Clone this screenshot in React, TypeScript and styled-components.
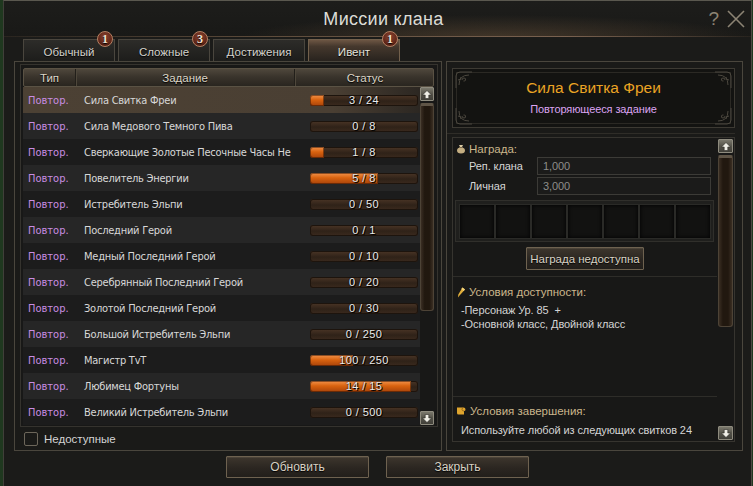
import React from 'react';
import styled, { createGlobalStyle } from 'styled-components';

const FONT = `"Liberation Sans", Arial, sans-serif`;
const ROW_FONT = `"DejaVu Sans Condensed", "DejaVu Sans", sans-serif`;

const Global = createGlobalStyle`
  html, body { margin: 0; padding: 0; background: #1f381f; }
  body { font-family: ${FONT}; }
  * { box-sizing: border-box; }
`;

const Window = styled.div`
  margin-left: 3px;
  width: 749px;
  height: 486px;
  background: #1b1b19;
  border-left: 1px solid #403f39;
  border-top: 1px solid #5a584f;
  border-right: 1px solid #4c4a43;
  display: flex;
  flex-direction: column;
  color: #d2d2d2;
  font-family: ${FONT};
  font-size: 11.5px;
`;

const TitleBar = styled.div`
  height: 36px;
  flex: none;
  display: grid;
  grid-template-columns: 1fr auto 1fr;
  align-items: center;
  background:
    linear-gradient(to right, rgba(90, 72, 55, 0.25), #5e4c3b 35%, #7a6250 75%, rgba(90, 72, 55, 0.2)) bottom / 100% 1px no-repeat,
    radial-gradient(ellipse 300px 26px at 66% 100%, rgba(120, 92, 64, 0.42), transparent 85%),
    linear-gradient(#1d1d1b, #191917);
`;

const Title = styled.div`
  grid-column: 2;
  padding-left: 12px;
  font-size: 18px;
  color: #dcdcd6;
  letter-spacing: 0.3px;
`;

const TitleIcons = styled.div`
  grid-column: 3;
  justify-self: end;
  display: flex;
  align-items: center;
  gap: 8px;
  padding-right: 6px;
  color: #8c8474;
  font-size: 19px;
`;

const TabRow = styled.div`
  height: 24px;
  flex: none;
  display: flex;
  align-items: flex-end;
  gap: 3px;
  padding-left: 19px;
`;

const Tab = styled.div<{ $active?: boolean }>`
  position: relative;
  width: 92px;
  height: 22px;
  display: flex;
  align-items: center;
  justify-content: center;
  padding-top: 2px;
  border: 1px solid ${p => (p.$active ? '#72604c' : '#4a463e')};
  border-bottom: none;
  background: ${p =>
    p.$active
      ? 'linear-gradient(#6d5643 0%, #45382d 30%, #28231e 100%)'
      : 'linear-gradient(#2d2c29, #1d1d1b)'};
  color: ${p => (p.$active ? '#e4e2dc' : '#d4d2cc')};
  font-size: 11.5px;
  text-shadow: 0 1px 1px #000;
`;

const Badge = styled.div`
  position: absolute;
  top: -9px;
  right: 1px;
  width: 16px;
  height: 16px;
  border-radius: 50%;
  background: radial-gradient(circle at 50% 35%, #8a4430, #5a2216 70%);
  border: 1px solid #b48062;
  color: #f0e2d4;
  font-family: "Liberation Serif", serif;
  font-weight: bold;
  font-size: 12px;
  display: flex;
  align-items: center;
  justify-content: center;
  z-index: 2;
`;

const Body = styled.div`
  height: 390px;
  flex: none;
  display: flex;
  gap: 4px;
  padding: 0 6px 0 10px;
`;

const LeftPanel = styled.div`
  width: 428px;
  height: 390px;
  border: 1px solid #4a463d;
  background: #1a1a18;
  padding: 2px 3px 0 5px;
  display: flex;
  flex-direction: column;
`;

const TableBox = styled.div`
  height: 363px;
  border: 1px solid #35332e;
  background: #181817;
  padding: 3px 3px 1px 2px;
  display: flex;
  flex-direction: column;
`;

const Header = styled.div`
  height: 19px;
  flex: none;
  display: grid;
  grid-template-columns: 51px 219px 141px;
  background: linear-gradient(#4f473c, #3a342c 45%, #29251f);
  border: 1px solid #5a5244;
  border-radius: 2px;
  color: #dcd6c8;
  font-size: 11.5px;
`;

const HeadCell = styled.div<{ $first?: boolean }>`
  display: flex;
  align-items: center;
  justify-content: center;
  border-left: ${p => (p.$first ? 'none' : '1px solid #221f1a')};
  box-shadow: ${p => (p.$first ? 'none' : 'inset 1px 0 0 #4e473b')};
  text-shadow: 0 1px 1px #000;
`;

const TableBody = styled.div`
  display: flex;
  height: 338px;
`;

const Rows = styled.div`
  width: 397px;
  display: flex;
  flex-direction: column;
`;

const Row = styled.div<{ $variant: 'sel' | 'light' | 'dark' }>`
  height: 26px;
  flex: none;
  display: grid;
  grid-template-columns: 51px 219px 127px;
  align-items: center;
  font-family: ${ROW_FONT};
  font-stretch: condensed;
  font-size: 11px;
  background: ${p =>
    p.$variant === 'sel'
      ? 'linear-gradient(to right, #4c4134 0%, #4a3f33 78%, #2c2722 100%)'
      : p.$variant === 'light'
      ? '#262626'
      : '#1c1c1c'};
`;

const TypeCell = styled.div`
  padding-left: 5px;
  color: #c98de2;
  white-space: nowrap;
`;

const NameCell = styled.div`
  padding-left: 10px;
  color: #d8d8d8;
  white-space: nowrap;
  letter-spacing: -0.25px;
  min-width: 0;
`;

const StatusCell = styled.div`
  padding-left: 17px;
  display: flex;
  align-items: center;
`;

const Bar = styled.div`
  width: 108px;
  height: 11px;
  border-radius: 3px;
  display: grid;
  background: linear-gradient(#4a3526, #2f2218 55%, #3b2a1e);
  box-shadow: inset 0 0 0 1px #1d140d;
`;

const Fill = styled.div`
  grid-area: 1 / 1;
  height: 11px;
  border-radius: 3px 0 0 3px;
  background: linear-gradient(#f2924a, #d8620f 45%, #a8430a);
  box-shadow: inset 0 0 0 1px rgba(40, 16, 4, 0.5);
`;

const BarText = styled.div`
  grid-area: 1 / 1;
  display: flex;
  align-items: center;
  justify-content: center;
  height: 11px;
  font-family: ${FONT};
  font-size: 11px;
  letter-spacing: 0.4px;
  color: #ececec;
  text-shadow: 1px 1px 0 #000, 0 0 2px #000;
`;

const ScrollCol = styled.div<{ $w: number }>`
  width: ${p => p.$w}px;
  display: flex;
  flex-direction: column;
`;

const ArrowBtn = styled.div`
  height: 14px;
  flex: none;
  background: linear-gradient(#7a786c, #55534a 50%, #403f38);
  border: 1px solid #8e8b7e;
  border-radius: 1px;
  display: flex;
  align-items: center;
  justify-content: center;
`;

const Thumb = styled.div<{ $h: number }>`
  height: ${p => p.$h}px;
  margin-top: 2px;
  flex: none;
  border: 1px solid #4d4336;
  border-top: 3px solid #5e5446;
  border-radius: 2px 2px 3px 3px;
  background: linear-gradient(to right, #3a2e23, #21180f 30%, #21180f 70%, #3a2e23);
`;

const Spacer = styled.div`
  flex: 1;
`;

const CheckRow = styled.div`
  flex: 1;
  display: flex;
  align-items: center;
  gap: 6px;
  padding-left: 4px;
  padding-top: 1px;
  color: #d4d4d4;
`;

const Check = styled.div`
  width: 14px;
  height: 14px;
  border: 1px solid #6c665a;
  border-radius: 2px;
  background: #1a1a18;
`;

const RightPanel = styled.div`
  width: 297px;
  height: 390px;
  border: 1px solid #4a463d;
  background: #1a1a18;
  padding: 6px 7px 8px 5px;
  display: flex;
  flex-direction: column;
  font-size: 11px;
  letter-spacing: -0.1px;
`;

const TitleBox = styled.div`
  position: relative;
  height: 60px;
  flex: none;
  border: 1px solid #3d3a33;
  background: #131311;
  box-shadow: inset 0 0 0 3px #131311, inset 0 0 0 4px #2b2924;
  display: flex;
  flex-direction: column;
  align-items: center;
  padding-top: 9px;
  gap: 4px;
`;

const Corner = styled.svg<{ $pos: 'tl' | 'tr' | 'bl' | 'br' }>`
  position: absolute;
  width: 18px;
  height: 18px;
  ${p => (p.$pos[0] === 't' ? 'top: 2px;' : 'bottom: 2px;')}
  ${p => (p.$pos[1] === 'l' ? 'left: 2px;' : 'right: 2px;')}
  transform: ${p =>
    p.$pos === 'tl' ? 'none' : p.$pos === 'tr' ? 'scaleX(-1)' : p.$pos === 'bl' ? 'scaleY(-1)' : 'scale(-1,-1)'};
`;

const QuestTitle = styled.div`
  font-size: 15.5px;
  line-height: 20px;
  letter-spacing: 0;
  color: #eba424;
`;

const QuestSub = styled.div`
  font-size: 11px;
  line-height: 14px;
  color: #dca4f2;
`;

const PanelSep = styled.div`
  height: 1px;
  flex: none;
  margin: 5px 0 3px -5px;
  background: #2f2d28;
`;

const DetailBox = styled.div`
  height: 305px;
  flex: none;
  border: 1px solid #36342f;
  background: #181817;
  display: flex;
  gap: 1px;
`;

const DetailContent = styled.div`
  width: 264px;
  display: flex;
  flex-direction: column;
`;

const SectionHead = styled.div<{ $mt: number }>`
  height: 14px;
  margin-top: ${p => p.$mt}px;
  padding-left: 3px;
  display: flex;
  align-items: center;
  gap: 3px;
  color: #cbb68c;
  font-size: 11.5px;
  letter-spacing: 0;
`;

const RewardRow = styled.div<{ $mt: number }>`
  height: 18px;
  margin-top: ${p => p.$mt}px;
  display: grid;
  grid-template-columns: 68px 174px;
  align-items: center;
  padding-left: 16px;
`;

const RewardLabel = styled.div`
  color: #d6d6d6;
`;

const Field = styled.div`
  height: 18px;
  border: 1px solid #3c3b37;
  background: #1b1b1a;
  color: #8e8e8a;
  padding-left: 5px;
  display: flex;
  align-items: center;
`;

const Slots = styled.div`
  height: 42px;
  margin: 5px 3px 0 2px;
  border: 1px solid #302f2b;
  background: #1f1f1d;
  padding: 3px 2px 3px 3px;
  display: grid;
  grid-template-columns: repeat(7, 36px);
`;

const Slot = styled.div`
  height: 35px;
  background: #121211;
  border: 1px solid #2a2a27;
  box-shadow: inset 0 0 4px #000;
`;

const Button = styled.button<{ $w: number; $h: number }>`
  width: ${p => p.$w}px;
  height: ${p => p.$h}px;
  flex: none;
  border: 1px solid #6e6250;
  border-radius: 1px;
  background: linear-gradient(#3d362d, #2b2621 55%, #221f1b);
  box-shadow: inset 0 1px 0 rgba(255, 240, 210, 0.08);
  color: #d8d2c4;
  font-family: ${FONT};
  font-size: 12px;
  text-shadow: 0 1px 1px #000;
  padding: 0;
`;

const CenterButton = styled(Button)`
  margin: 5px auto 0;
  font-size: 11.5px;
`;

const ContentSep = styled.div<{ $mt: number }>`
  height: 1px;
  flex: none;
  margin-top: ${p => p.$mt}px;
  background: #2e2d29;
`;

const Conditions = styled.div`
  height: 119px;
  flex: none;
  display: flex;
  flex-direction: column;
`;

const CondText = styled.div<{ $mt: number }>`
  margin-top: ${p => p.$mt}px;
  padding-left: 8px;
  line-height: 14px;
  color: #d4d4d4;
  white-space: pre;
`;

const ScrollColWrap = styled.div`
  padding: 1px 0;
  display: flex;
`;

const Footer = styled.div`
  flex: 1;
  display: flex;
  justify-content: center;
  gap: 17px;
  padding-top: 5px;
`;

const missions = [
  { name: 'Сила Свитка Фреи', cur: 3, max: 24 },
  { name: 'Сила Медового Темного Пива', cur: 0, max: 8 },
  { name: 'Сверкающие Золотые Песочные Часы Не', cur: 1, max: 8 },
  { name: 'Повелитель Энергии', cur: 5, max: 8 },
  { name: 'Истребитель Эльпи', cur: 0, max: 50 },
  { name: 'Последний Герой', cur: 0, max: 1 },
  { name: 'Медный Последний Герой', cur: 0, max: 10 },
  { name: 'Серебрянный Последний Герой', cur: 0, max: 20 },
  { name: 'Золотой Последний Герой', cur: 0, max: 30 },
  { name: 'Большой Истребитель Эльпи', cur: 0, max: 250 },
  { name: 'Магистр TvT', cur: 100, max: 250 },
  { name: 'Любимец Фортуны', cur: 14, max: 15 },
  { name: 'Великий Истребитель Эльпи', cur: 0, max: 500 },
];

const Arrow = ({ down }: { down?: boolean }) => (
  <svg width="10" height="9" viewBox="0 0 10 9" style={{ transform: down ? 'scaleY(-1)' : undefined }}>
    <path d="M5 0.5 L9.5 5 H6.8 V8.5 H3.2 V5 H0.5 Z" fill="#efeee6" stroke="#2a2924" strokeWidth="0.6" />
  </svg>
);

const Scrollbar = ({ w, thumb }: { w: number; thumb: number }) => (
  <ScrollCol $w={w}>
    <ArrowBtn><Arrow /></ArrowBtn>
    <Thumb $h={thumb} />
    <Spacer />
    <ArrowBtn><Arrow down /></ArrowBtn>
  </ScrollCol>
);

const CornerOrn = ({ pos }: { pos: 'tl' | 'tr' | 'bl' | 'br' }) => (
  <Corner $pos={pos} viewBox="0 0 18 18">
    <g fill="none" stroke="#4b473e" strokeWidth="1">
      <path d="M1 17 V5 Q1 1 5 1 H17" />
      <path d="M4 14 Q4 4 14 4" />
      <path d="M7 9 Q7 7 9 7 Q11 7 10.5 9 Q10 10.5 8.5 10" />
      <path d="M3 9 Q6 9 6 6" />
    </g>
  </Corner>
);

const PouchIcon = () => (
  <svg width="10" height="10" viewBox="0 0 10 10">
    <path d="M3 1 H7 L6 3 H4 Z" fill="#d9c9a2" />
    <ellipse cx="5" cy="6.6" rx="4" ry="3" fill="#c4ae82" />
    <rect x="3" y="3" width="4" height="1" fill="#7e6c4e" />
  </svg>
);

const KeyIcon = () => (
  <svg width="10" height="11" viewBox="0 0 10 11">
    <path d="M6.5 0.5 L9 2.5 L4 8 L2 10.5 L2.3 7.5 Z" fill="#e0ae3a" />
    <path d="M6.5 0.5 L9 2.5 L7.6 4 L5.2 2 Z" fill="#f4d47a" />
  </svg>
);

const ScrollIcon = () => (
  <svg width="11" height="10" viewBox="0 0 11 10">
    <path d="M1 1.5 H7.5 Q9.5 1.5 9.5 3.5 Q9.5 5 8 5 V8.5 H2.5 Q1 8.5 1 7 Z" fill="#dfa52e" />
    <path d="M7.5 1.5 Q6 1.5 6 3.5 Q6 5 8 5" fill="none" stroke="#8a5a14" strokeWidth="0.8" />
  </svg>
);

export default function App() {
  return (
    <>
      <Global />
      <Window>
        <TitleBar>
          <Title>Миссии клана</Title>
          <TitleIcons>
            <span>?</span>
            <svg width="18" height="18" viewBox="0 0 18 18">
              <path d="M1 1 L17 17 M17 1 L1 17" stroke="#8c8474" strokeWidth="1.6" />
            </svg>
          </TitleIcons>
        </TitleBar>

        <TabRow>
          <Tab>Обычный<Badge>1</Badge></Tab>
          <Tab>Сложные<Badge>3</Badge></Tab>
          <Tab>Достижения</Tab>
          <Tab $active>Ивент<Badge>1</Badge></Tab>
        </TabRow>

        <Body>
          <LeftPanel>
            <TableBox>
              <Header>
                <HeadCell $first>Тип</HeadCell>
                <HeadCell>Задание</HeadCell>
                <HeadCell>Статус</HeadCell>
              </Header>
              <TableBody>
                <Rows>
                  {missions.map((m, i) => (
                    <Row key={m.name} $variant={i === 0 ? 'sel' : i % 2 === 1 ? 'light' : 'dark'}>
                      <TypeCell>Повтор.</TypeCell>
                      <NameCell>{m.name}</NameCell>
                      <StatusCell>
                        <Bar>
                          {m.cur > 0 && <Fill style={{ width: `${(m.cur / m.max) * 100}%` }} />}
                          <BarText>{`${m.cur} / ${m.max}`}</BarText>
                        </Bar>
                      </StatusCell>
                    </Row>
                  ))}
                </Rows>
                <Scrollbar w={14} thumb={208} />
              </TableBody>
            </TableBox>
            <CheckRow>
              <Check />
              <span>Недоступные</span>
            </CheckRow>
          </LeftPanel>

          <RightPanel>
            <TitleBox>
              <CornerOrn pos="tl" />
              <CornerOrn pos="tr" />
              <CornerOrn pos="bl" />
              <CornerOrn pos="br" />
              <QuestTitle>Сила Свитка Фреи</QuestTitle>
              <QuestSub>Повторяющееся задание</QuestSub>
            </TitleBox>
            <PanelSep />
            <DetailBox>
              <DetailContent>
                <SectionHead $mt={4}><PouchIcon />Награда:</SectionHead>
                <RewardRow $mt={1}>
                  <RewardLabel>Реп. клана</RewardLabel>
                  <Field>1,000</Field>
                </RewardRow>
                <RewardRow $mt={2}>
                  <RewardLabel>Личная</RewardLabel>
                  <Field>3,000</Field>
                </RewardRow>
                <Slots>
                  {Array.from({ length: 7 }).map((_, i) => (
                    <Slot key={i} />
                  ))}
                </Slots>
                <CenterButton $w={118} $h={23}>Награда недоступна</CenterButton>
                <ContentSep $mt={6} />
                <Conditions>
                  <SectionHead $mt={8}><KeyIcon />Условия доступности:</SectionHead>
                  <CondText $mt={4}>{'-Персонаж Ур. 85  +'}</CondText>
                  <CondText $mt={0}>-Основной класс, Двойной класс</CondText>
                </Conditions>
                <ContentSep $mt={0} />
                <SectionHead $mt={7}><ScrollIcon />Условия завершения:</SectionHead>
                <CondText $mt={5}>Используйте любой из следующих свитков 24</CondText>
              </DetailContent>
              <ScrollColWrap>
                <Scrollbar w={15} thumb={172} />
              </ScrollColWrap>
            </DetailBox>
          </RightPanel>
        </Body>

        <Footer>
          <Button $w={143} $h={22}>Обновить</Button>
          <Button $w={143} $h={22}>Закрыть</Button>
        </Footer>
      </Window>
    </>
  );
}
